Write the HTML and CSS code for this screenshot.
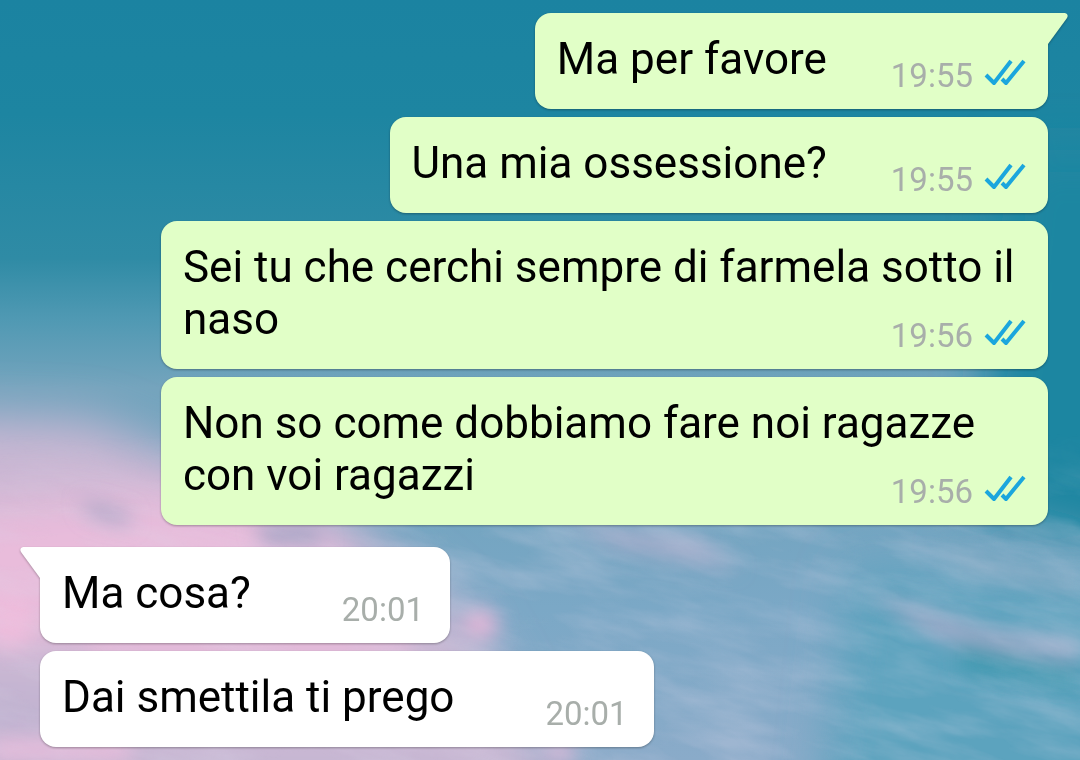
FILE: index.html
```html
<!DOCTYPE html>
<html lang="it">
<head>
    <meta charset="UTF-8">
    <meta name="viewport" content="width=device-width, initial-scale=1.0">
    <title>Chat</title>
    <link rel="stylesheet" href="styles.css">
</head>
<body>

    <!-- Sky wallpaper -->
    <svg class="wallpaper" viewBox="0 0 1080 760" preserveAspectRatio="none" aria-hidden="true">
        <defs>
            <linearGradient id="sky" x1="0" y1="0" x2="0" y2="1">
                <stop offset="0" stop-color="#1b83a1"/>
                <stop offset="0.15" stop-color="#1d85a1"/>
                <stop offset="0.34" stop-color="#2f8ba5"/>
                <stop offset="0.42" stop-color="#5099b3"/>
                <stop offset="0.51" stop-color="#74a4bd"/>
                <stop offset="0.62" stop-color="#70a3be"/>
                <stop offset="0.8" stop-color="#7ba8c6"/>
                <stop offset="1" stop-color="#8aabc9"/>
            </linearGradient>
            <linearGradient id="fade" x1="0" y1="0" x2="0" y2="1">
                <stop offset="0.57" stop-color="#000000"/>
                <stop offset="0.68" stop-color="#ffffff"/>
            </linearGradient>
            <filter id="soft" x="-50%" y="-50%" width="200%" height="200%">
                <feGaussianBlur stdDeviation="24"/>
            </filter>
            <filter id="wisp" x="-50%" y="-100%" width="200%" height="300%">
                <feGaussianBlur stdDeviation="10"/>
            </filter>
            <filter id="streaks" x="0" y="0" width="100%" height="100%">
                <feTurbulence type="fractalNoise" baseFrequency="0.01 0.04" numOctaves="5" seed="8"/>
                <feColorMatrix values="0 0 0 0 0.72  0 0 0 0 0.68  0 0 0 0 0.82  2 0 0 0 -0.7"/>
            </filter>
            <mask id="low"><rect width="1080" height="760" fill="url(#fade)"/></mask>
        </defs>
        <rect width="1080" height="760" fill="url(#sky)"/>
        <g filter="url(#soft)">
            <path fill="#1b86a1" d="M1010 150h140v410L970 510z"/>
            <path fill="#5ba3be" d="M850 570l290 10v250H820z"/>
            <path fill="#c9b7d3" d="M-60 415l150 5 100 40 160 60 120 100 100 180H-60z"/>
            <path fill="#e9bcdb" d="M-60 510l220-20 160 20 60 130-140 10-300-20z"/>
            <path fill="#bfb2d0" d="M-60 690h120v60H-60z"/>
        </g>
        <g filter="url(#wisp)">
            <path fill="#a2acca" d="M560 520l140 20 40 30-120-20zM860 590l130 40 90 12v18l-140-20z"/>
            <path fill="#7ba8c2" d="M930 540l150 35v20l-110-20z"/>
            <path fill="#4199b0" d="M960 640l120 30v20l-120-20z"/>
            <path fill="#a3a5c5" d="M255 525h60l10 20h-60zM80 500l50 14v12l-40-10z"/>
            <ellipse cx="480" cy="624" rx="18" ry="14" fill="#e6b5d7"/>
            <ellipse cx="560" cy="752" rx="16" ry="10" fill="#dcb3d4"/>
            <ellipse cx="10" cy="620" rx="26" ry="28" fill="#efbcdc"/>
            <path fill="#eabbdb" d="M90 640h320v14H90zM-10 740h140v20H-10z"/>
        </g>
        <g mask="url(#low)">
            <rect x="-100" y="200" width="1400" height="760" filter="url(#streaks)" opacity="0.25" transform="rotate(14 540 600)"/>
        </g>
    </svg>

    <svg class="symbols" aria-hidden="true">
        <symbol id="ticks" viewBox="0 0 42 34">
            <path d="M2 17l8 8L27 3M18 21l4 4L40 3" fill="none" stroke="#1ba6dd" stroke-width="4" stroke-linejoin="round"/>
        </symbol>
        <symbol id="tail" viewBox="0 0 20 32">
            <path d="M0 0h17q4 1 2 5L0 31z" fill="currentColor"/>
        </symbol>
    </svg>

    <main class="chat">
        <!-- Sent -->
        <div class="group">
            <div class="bubble sent first">
                <svg class="tail"><use href="#tail"/></svg>
                <span class="text">Ma per favore</span>
                <span class="meta"><time>19:55</time><svg class="ticks"><use href="#ticks"/></svg></span>
            </div>
            <div class="bubble sent">
                <span class="text">Una mia ossessione?</span>
                <span class="meta"><time>19:55</time><svg class="ticks"><use href="#ticks"/></svg></span>
            </div>
            <div class="bubble sent">
                <span class="text">Sei tu che cerchi sempre di farmela sotto il naso</span>
                <span class="meta"><time>19:56</time><svg class="ticks"><use href="#ticks"/></svg></span>
            </div>
            <div class="bubble sent">
                <span class="text">Non so come dobbiamo fare noi ragazze con voi ragazzi</span>
                <span class="meta"><time>19:56</time><svg class="ticks"><use href="#ticks"/></svg></span>
            </div>
        </div>

        <!-- Received -->
        <div class="group">
            <div class="bubble received first">
                <svg class="tail"><use href="#tail"/></svg>
                <span class="text">Ma cosa?</span>
                <span class="meta"><time>20:01</time></span>
            </div>
            <div class="bubble received">
                <span class="text">Dai smettila ti prego</span>
                <span class="meta"><time>20:01</time></span>
            </div>
        </div>
    </main>

</body>
</html>
```
FILE: styles.css
```css
* {
    box-sizing: border-box;
}

body {
    margin: 0;
    min-height: 100vh;
    font-family: Roboto, sans-serif;
    background-color: #1b83a1;
}

.wallpaper {
    position: fixed;
    top: 0;
    left: 0;
    width: 100%;
    height: 100%;
    z-index: -1;
}

.symbols {
    display: none;
}

.chat {
    display: flex;
    flex-direction: column;
    gap: 22px;
    padding: 13px 32px 12px 40px;
}

.group {
    display: flex;
    flex-direction: column;
    gap: 8px;
}

.bubble {
    position: relative;
    display: flow-root;
    max-width: 88%;
    padding: 20px 22px 13px;
    border-radius: 16px;
    font-size: 44px;
    line-height: 52px;
    filter: drop-shadow(0 1px 1px rgba(0, 0, 0, 0.3));
}

.sent {
    align-self: flex-end;
    color: #e1ffc7;
    background-color: #e1ffc7;
}

.received {
    align-self: flex-start;
    padding-right: 26px;
    color: #ffffff;
    background-color: #ffffff;
}

.sent.first {
    border-top-right-radius: 0;
}

.received.first {
    border-top-left-radius: 0;
}

.tail {
    position: absolute;
    top: 0;
    width: 20px;
    height: 32px;
}

.sent .tail {
    left: 100%;
}

.received .tail {
    right: 100%;
    transform: scaleX(-1);
}

.text {
    color: #000000;
}

/* floats at the end of the last line of text */
.meta {
    float: right;
    display: flex;
    gap: 11px;
    margin-top: 23px;
    margin-left: 64px;
    font-size: 33px;
    line-height: 40px;
    color: #a8aeaa;
}

.received .meta {
    margin-left: 91px;
}

.ticks {
    width: 42px;
    height: 34px;
    margin-top: 2px;
}
```
